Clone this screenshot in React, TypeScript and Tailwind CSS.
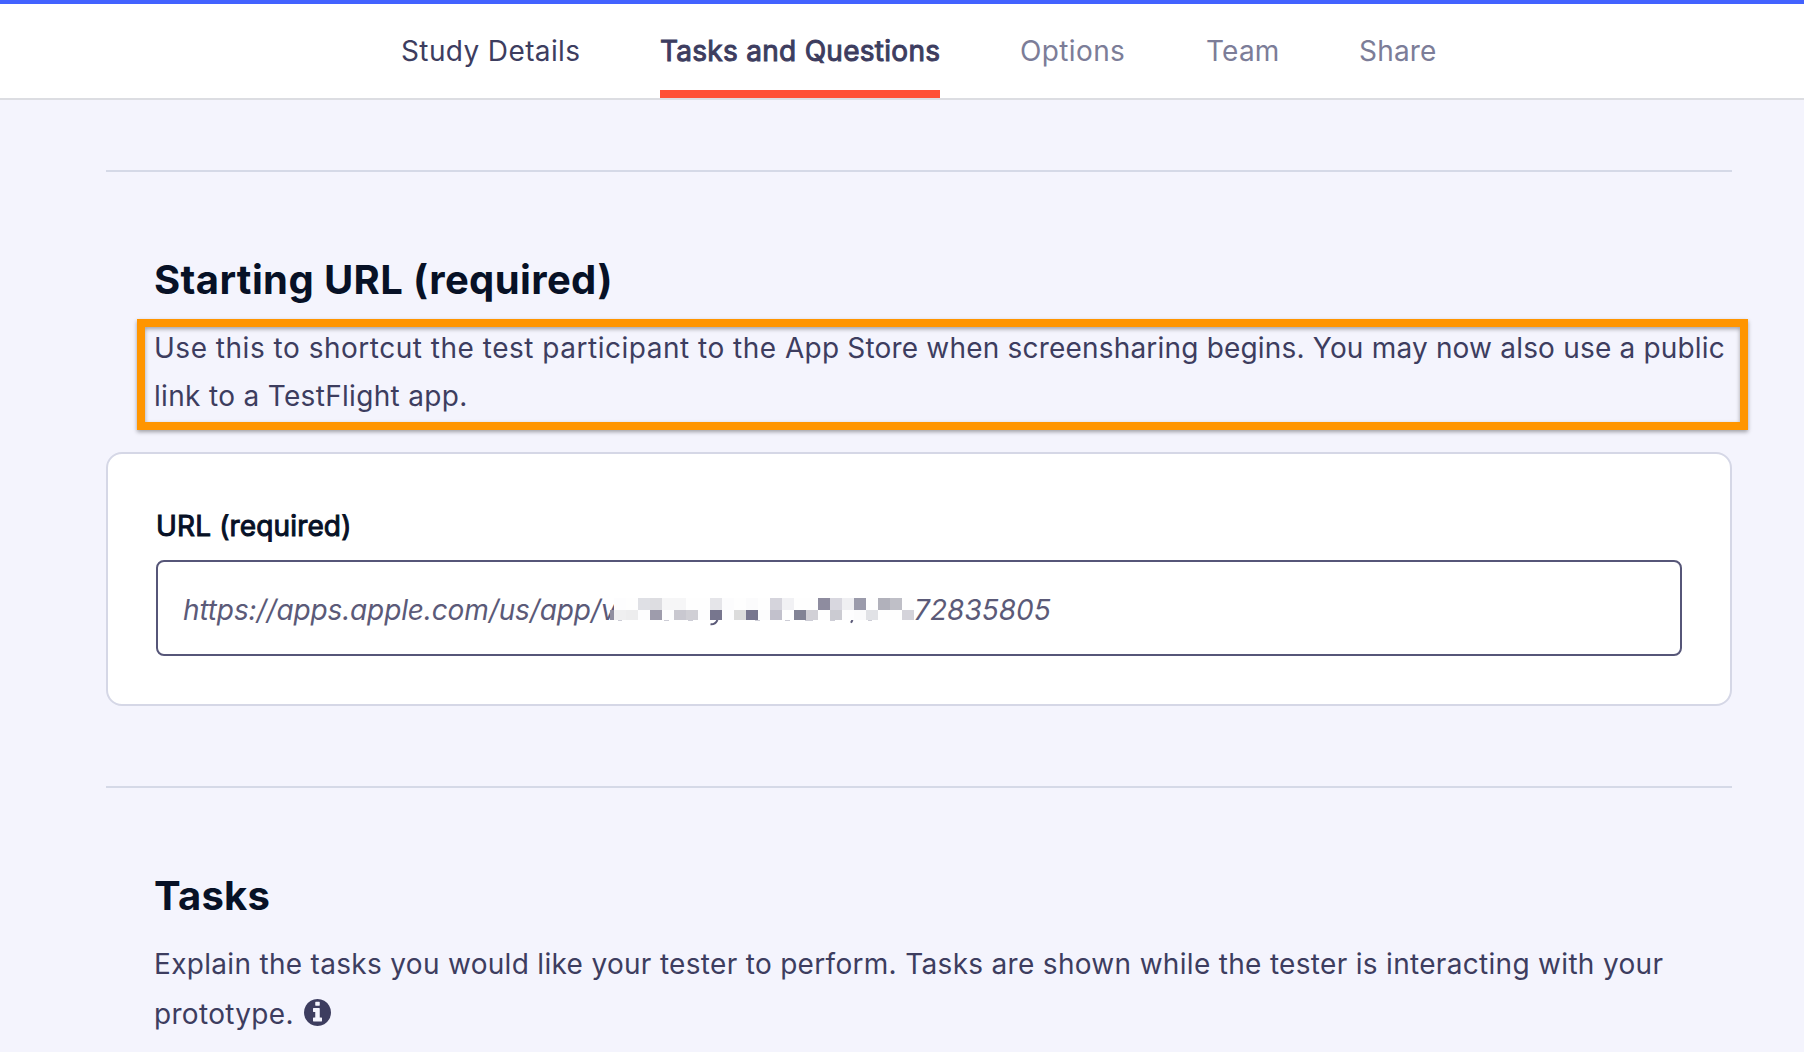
const mosaicTop = ["#fdfdfe","#fefefe","#dfe0e5","#dddde1","#f6f6f7","#f6f6f7","#fefefe","#fefefe","#e5e5e9","#fcfcfd","#fefefe","#fbfbfc","#fefefe","#d5d4dc","#f1f1f4","#fefefe","#fefefe","#8e8c9f","#d8d7df","#efeff2","#9b9bab","#fefefe","#b1b1bb","#bfbfc7","#fefefe"];
const mosaicBottom = ["#efeff0","#ededee","#fdfdfe","#9e9cac","#fdfdfe","#c9c8d0","#d0cfd5","#fdfdfe","#77768e","#fdfdfe","#dcdcdc","#77768e","#fcfcfd","#c2c1cc","#fefefe","#828395","#d1d0d6","#fefefe","#cbcbd2","#fdfdfe","#fbfbfc","#e1e2e6","#fefefe","#fefefe","#d4d3da"];

function Redaction() {
  return (
    <div className="absolute left-[456px] top-[36px] w-[301px]">
      <div className="flex h-3 overflow-hidden">
        {mosaicTop.map((color, i) => (
          <span key={i} className="h-3 w-3 shrink-0" style={{ backgroundColor: color }} />
        ))}
      </div>
      <div className="-ml-1 flex h-2.5">
        <span className="h-2.5 w-1 shrink-0 bg-[#8f8e9f]" />
        {mosaicBottom.map((color, i) => (
          <span key={i} className="h-2.5 w-3 shrink-0" style={{ backgroundColor: color }} />
        ))}
      </div>
      <svg className="block h-[7px] w-[301px] bg-white" viewBox="0 0 301 7" fill="none" stroke="#5b5a78">
        <path d="M103.5 0 Q101 4.8 96.5 4.3" strokeWidth="2" />
        <path d="M238.5 0 L237 2.8" strokeWidth="2" />
        <path d="M4 .5h4M50 .5h5M74 .5h5M141 .5h5M171 .5h5M191 .5h8M216 .5h5M254 .5h4" strokeOpacity=".3" />
      </svg>
    </div>
  );
}

function InfoIcon() {
  return (
    <svg className="relative -top-1 ml-0.5 inline-block size-[27px]" viewBox="0 128 1536 1536" fill="currentColor">
      <path d="M1024 1376v-160q0-14-9-23t-23-9h-96v-512q0-14-9-23t-23-9h-320q-14 0-23 9t-9 23v160q0 14 9 23t23 9h96v320h-96q-14 0-23 9t-9 23v160q0 14 9 23t23 9h448q14 0 23-9t9-23zm-128-896v-160q0-14-9-23t-23-9h-192q-14 0-23 9t-9 23v160q0 14 9 23t23 9h192q14 0 23-9t9-23zm640 416q0 209-103 385.5t-279.5 279.5-385.5 103-385.5-103-279.5-279.5-103-385.5 103-385.5 279.5-279.5 385.5-103 385.5 103 279.5 279.5 103 385.5z" />
    </svg>
  );
}

export default function App() {
  return (
    <div className="h-[1052px] overflow-hidden bg-[#f4f4fd] font-['Inter',sans-serif] text-[28px] font-normal text-[#3d3d5f]">
      <header className="flex h-[100px] items-stretch border-t-4 border-b-2 border-t-[#4262ff] border-b-[#dcdde2] bg-white pl-[401px] leading-[94px]">
        <nav className="flex whitespace-nowrap">
          <a className="w-[259px] tracking-[0.38px]">Study Details</a>
          <a className="mr-[80px] h-[94px] w-[280px] border-b-8 border-[#ff5035] tracking-[0.28px] [-webkit-text-stroke:1px_currentColor]">Tasks and Questions</a>
          <a className="w-[186px] tracking-[0.38px] text-[#7c7d98]">Options</a>
          <a className="w-[153px] tracking-[0.2px] text-[#7c7d98]">Team</a>
          <a className="tracking-[0.2px] text-[#7c7d98]">Share</a>
        </nav>
      </header>
      <main className="ml-[106px] mt-[70px] w-[1626px]">
        <section className="h-[616px] border-t-2 border-[#d5d9e7] pt-[82px]">
          <h1 className="h-[65px] pl-12 text-[40px] font-bold leading-[52px] tracking-[0.38px] text-[#071126]">Starting URL (required)</h1>
          <div className="ml-[31px] h-[111px] w-[1611px] border-8 border-[#ff9500] pl-[9px] leading-[48px] shadow-[0_2px_4px_rgba(0,0,0,0.35),inset_0_2px_4px_rgba(0,0,0,0.35)]">
            <p className="-mt-[3px] whitespace-nowrap tracking-[0.32px]">
              <span className="tracking-[0.51px]">Use this to shortcut the test participant to the </span>
              <span className="tracking-[0.19px]">App Store when screensharing begins. You may now also use a public</span>
              <br />link to a TestFlight app.
            </p>
          </div>
          <div className="mt-[22px] h-[254px] rounded-2xl border-2 border-[#d5d7e6] bg-white px-12 pt-[50px]">
            <label className="block h-[56px] leading-[44px] tracking-[0.15px] text-[#071126] [-webkit-text-stroke:1px_currentColor]">URL (required)</label>
            <div className="relative flex h-24 w-[1526px] whitespace-nowrap rounded-lg border-2 border-[#565678] px-[25px] leading-[96px] italic tracking-[-0.13px] text-[#5b5a78]">
              <span className="w-[731px]">https://apps.apple.com/us/app/v</span>
              <span className="tracking-[0.05px]">72835805</span>
              <Redaction />
            </div>
          </div>
        </section>
        <section className="border-t-2 border-[#d5d9e7] pl-12 pt-[82px]">
          <h2 className="h-[69px] text-[40px] font-bold leading-[52px] tracking-[0.2px] text-[#071126]">Tasks</h2>
          <p className="whitespace-nowrap leading-[50px] tracking-[0.31px]">
            Explain the tasks you would like your tester to perform. Tasks are shown while the tester is interacting with your<br />prototype. <InfoIcon />
          </p>
        </section>
      </main>
    </div>
  );
}
